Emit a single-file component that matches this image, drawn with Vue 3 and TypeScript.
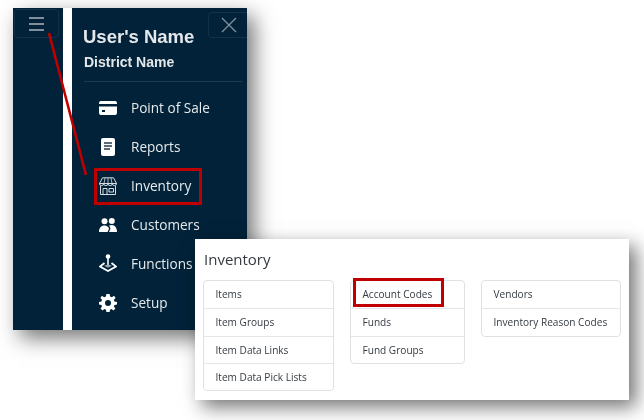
<script setup lang="ts">
interface NavItem {
  label: string
  icon: string
}

const navItems: NavItem[] = [
  { label: 'Point of Sale', icon: 'card' },
  { label: 'Reports', icon: 'report' },
  { label: 'Inventory', icon: 'store' },
  { label: 'Customers', icon: 'people' },
  { label: 'Functions', icon: 'joystick' },
  { label: 'Setup', icon: 'gear' }
]

const lists: { name: string; items: string[] }[] = [
  { name: 'first', items: ['Items', 'Item Groups', 'Item Data Links', 'Item Data Pick Lists'] },
  { name: 'second', items: ['Account Codes', 'Funds', 'Fund Groups'] },
  { name: 'third', items: ['Vendors', 'Inventory Reason Codes'] }
]
</script>

<template>
  <div class="canvas">
    <div class="phone">
      <div class="rail">
        <button class="menu-btn" type="button" aria-label="Menu">
          <span></span><span></span><span></span>
        </button>
      </div>
      <div class="stripe"></div>
      <div class="drawer">
        <button class="close-btn" type="button" aria-label="Close">
          <svg width="16" height="16" viewBox="0 0 16 16">
            <path d="M1 1L15 15M15 1L1 15" stroke="#7f8f9b" stroke-width="1.4" fill="none" />
          </svg>
        </button>
        <div class="user">User's Name</div>
        <div class="district">District Name</div>
        <hr class="divider" />
        <nav class="nav">
          <div v-for="item in navItems" :key="item.label" class="nav-row">
            <span class="nav-icon">
              <svg v-if="item.icon === 'card'" width="18" height="14" viewBox="0 0 18 14">
                <path fill="#fff" d="M2 0H16A2 2 0 0 1 18 2V3H0V2A2 2 0 0 1 2 0ZM0 5.5H18V12A2 2 0 0 1 16 14H2A2 2 0 0 1 0 12ZM3 9V11H6V9Z" fill-rule="evenodd" />
              </svg>
              <svg v-else-if="item.icon === 'report'" width="14" height="18" viewBox="0 0 14 18">
                <path fill="#fff" d="M2 0H12A2 2 0 0 1 14 2V16A2 2 0 0 1 12 18H2A2 2 0 0 1 0 16V2A2 2 0 0 1 2 0Z" />
                <path fill="#5d6c78" d="M3 4H11V6H3ZM3 7H11V9H3ZM3 10H9V12H3Z" />
              </svg>
              <svg v-else-if="item.icon === 'store'" width="18" height="18" viewBox="0 0 18 18" fill="none" stroke="#d8dde1" stroke-width="1">
                <path d="M3.5 0.800H14.500L17.500 6.500H0.500Z" />
                <path d="M6 1L5 6.500M12 1L13 6.500M9 1V6.500" stroke-width="0.800" />
                <path d="M0.500 6.500A2.100 2.100 0 0 0 4.700 6.500A2.100 2.100 0 0 0 9 6.500A2.100 2.100 0 0 0 13.300 6.500A2.100 2.100 0 0 0 17.500 6.500" />
                <path d="M1.500 9V17.500H16.500V9" />
                <path d="M4 17V11.500H8V17M10 11.500H14.500V15H10Z" />
              </svg>
              <svg v-else-if="item.icon === 'people'" width="18" height="14" viewBox="0 0 18 14">
                <circle cx="5.500" cy="3.300" r="3" fill="#fff" />
                <circle cx="12.800" cy="3" r="3" fill="#fff" />
                <path fill="#fff" d="M0 14C0 10 2 7.500 5.500 7.500C8 7.500 9.500 9 10.200 10.500L8.500 14ZM10 14L11.500 10.500C11 9 10.500 8 10 7.500C11 7.200 11.800 7 13 7C16 7 18 10 18 14Z" />
              </svg>
              <svg v-else-if="item.icon === 'joystick'" width="18" height="19" viewBox="0 0 18 19">
                <circle cx="9" cy="2.500" r="2.300" fill="#fff" />
                <path d="M8.200 4H9.800V11H8.200Z" fill="#fff" />
                <path fill="none" stroke="#fff" stroke-width="1.800" d="M5.500 9L1 12.500L9 17L17 12.500L12.500 9" />
                <path d="M5 11.800L9 13.800L13 11.800L9 10.500Z" fill="#9aa6af" />
              </svg>
              <svg v-else width="18" height="18" viewBox="0 0 18 18">
                <path fill="#fff" fill-rule="evenodd" d="M7.400 0H10.600L11.100 2.500L12.900 3.300L15 1.800L16.600 4L14.900 5.800L15.500 7.500L18 8V10.500L15.500 11L14.900 12.500L16.400 14.600L14.400 16.500L12.500 15L11 15.700L10.600 18H7.400L7 15.700L5.400 15L3.500 16.500L1.500 14.600L3 12.500L2.400 11L0 10.500V8L2.400 7.500L3 5.800L1.400 4L3 1.800L5.100 3.300L6.900 2.500ZM9 6A3 3 0 1 0 9 12A3 3 0 1 0 9 6Z" />
              </svg>
            </span>
            <span class="nav-label">{{ item.label }}</span>
          </div>
        </nav>
      </div>
    </div>

    <div class="card">
      <h2 class="card-title">Inventory</h2>
      <div class="columns">
        <ul v-for="list in lists" :key="list.name" class="group" :class="list.name">
          <li v-for="entry in list.items" :key="entry">{{ entry }}</li>
        </ul>
      </div>
    </div>

    <!-- red callouts over the screenshots -->
    <svg class="pointer" width="644" height="420" viewBox="0 0 644 420">
      <path d="M49 33L86 175" stroke="#c00000" stroke-width="2.600" fill="none" />
    </svg>
    <div class="callout callout-nav"></div>
    <div class="callout callout-code"></div>
  </div>
</template>

<style>
html,
body {
  margin: 0;
  background: #fff;
}
</style>

<style scoped>
.canvas {
  position: relative;
  width: 644px;
  height: 420px;
  overflow: hidden;
  background: #fff;
  font-family: "Open Sans", "Liberation Sans", sans-serif;
}

.phone {
  position: absolute;
  left: 13px;
  top: 8px;
  width: 234px;
  height: 322px;
  display: flex;
  background: #012238;
  box-shadow: 7px 8px 20px rgba(0, 0, 0, 0.55);
  filter: blur(0.3px);
}

.rail {
  width: 50px;
  flex: none;
}

.menu-btn {
  display: flex;
  flex-direction: column;
  justify-content: center;
  align-items: center;
  gap: 4px;
  width: 45px;
  height: 29px;
  margin: 1px 0 0 1px;
  padding: 0;
  background: transparent;
  border: 1px solid #12324a;
  border-radius: 4px;
}

.menu-btn span {
  display: block;
  width: 15px;
  height: 2px;
  background: #7f8f9b;
}

.stripe {
  width: 9px;
  flex: none;
  background: #fff;
}

.drawer {
  position: relative;
  flex: 1;
  padding: 18px 5px 0 11px;
  color: #e4e8eb;
  overflow: hidden;
}

.close-btn {
  position: absolute;
  right: -6px;
  top: 4px;
  display: flex;
  align-items: center;
  padding: 0 0 0 12px;
  width: 45px;
  height: 26px;
  background: transparent;
  border: 1px solid #12324a;
  border-radius: 4px;
}

.user {
  font-family: "Liberation Sans", sans-serif;
  font-weight: 700;
  font-size: 18.500px;
  line-height: 21px;
}

.district {
  margin-top: 6px;
  padding-left: 1px;
  font-family: "Liberation Sans", sans-serif;
  font-weight: 700;
  font-size: 14px;
  line-height: 18px;
}

.divider {
  margin: 10px 0 0 1px;
  border: 0;
  border-top: 1px solid #1d3a4e;
}

.nav {
  margin-top: 6px;
}

.nav-row {
  display: flex;
  align-items: center;
  height: 39px;
  padding-left: 15px;
}

.nav-icon {
  display: flex;
  justify-content: center;
  align-items: center;
  width: 20px;
  margin-right: 13px;
}

.nav-label {
  font-size: 13.600px;
  color: #e6eaed;
}

.card {
  position: absolute;
  left: 195px;
  top: 239px;
  width: 434px;
  height: 161px;
  box-sizing: border-box;
  padding: 10px 8px 0;
  background: #fff;
  box-shadow: 7px 7px 18px rgba(0, 0, 0, 0.55);
  color: #343b42;
  filter: blur(0.3px);
}

.card-title {
  margin: 0 0 10px 1px;
  font-size: 15px;
  font-weight: 400;
  line-height: 21px;
}

.columns {
  display: flex;
  align-items: flex-start;
  gap: 16px;
}

.group {
  box-sizing: border-box;
  margin: 0;
  padding: 0;
  list-style: none;
  border: 1px solid #dfe2e5;
  border-radius: 4px;
}

.group li {
  box-sizing: border-box;
  height: 27.300px;
  padding-left: 11.500px;
  font-size: 10.100px;
  line-height: 26.500px;
  white-space: nowrap;
}

.group li + li {
  border-top: 1px solid #e4e6e9;
}

.first {
  width: 131.500px;
}

.second {
  width: 115.500px;
}

.third {
  width: 140.500px;
}

.pointer {
  position: absolute;
  left: 0;
  top: 0;
  pointer-events: none;
}

.callout {
  position: absolute;
  box-sizing: border-box;
  border: 3px solid #c00000;
}

.callout-nav {
  left: 94px;
  top: 168px;
  width: 108px;
  height: 37px;
}

.callout-code {
  left: 353px;
  top: 278px;
  width: 91px;
  height: 29px;
}
</style>
